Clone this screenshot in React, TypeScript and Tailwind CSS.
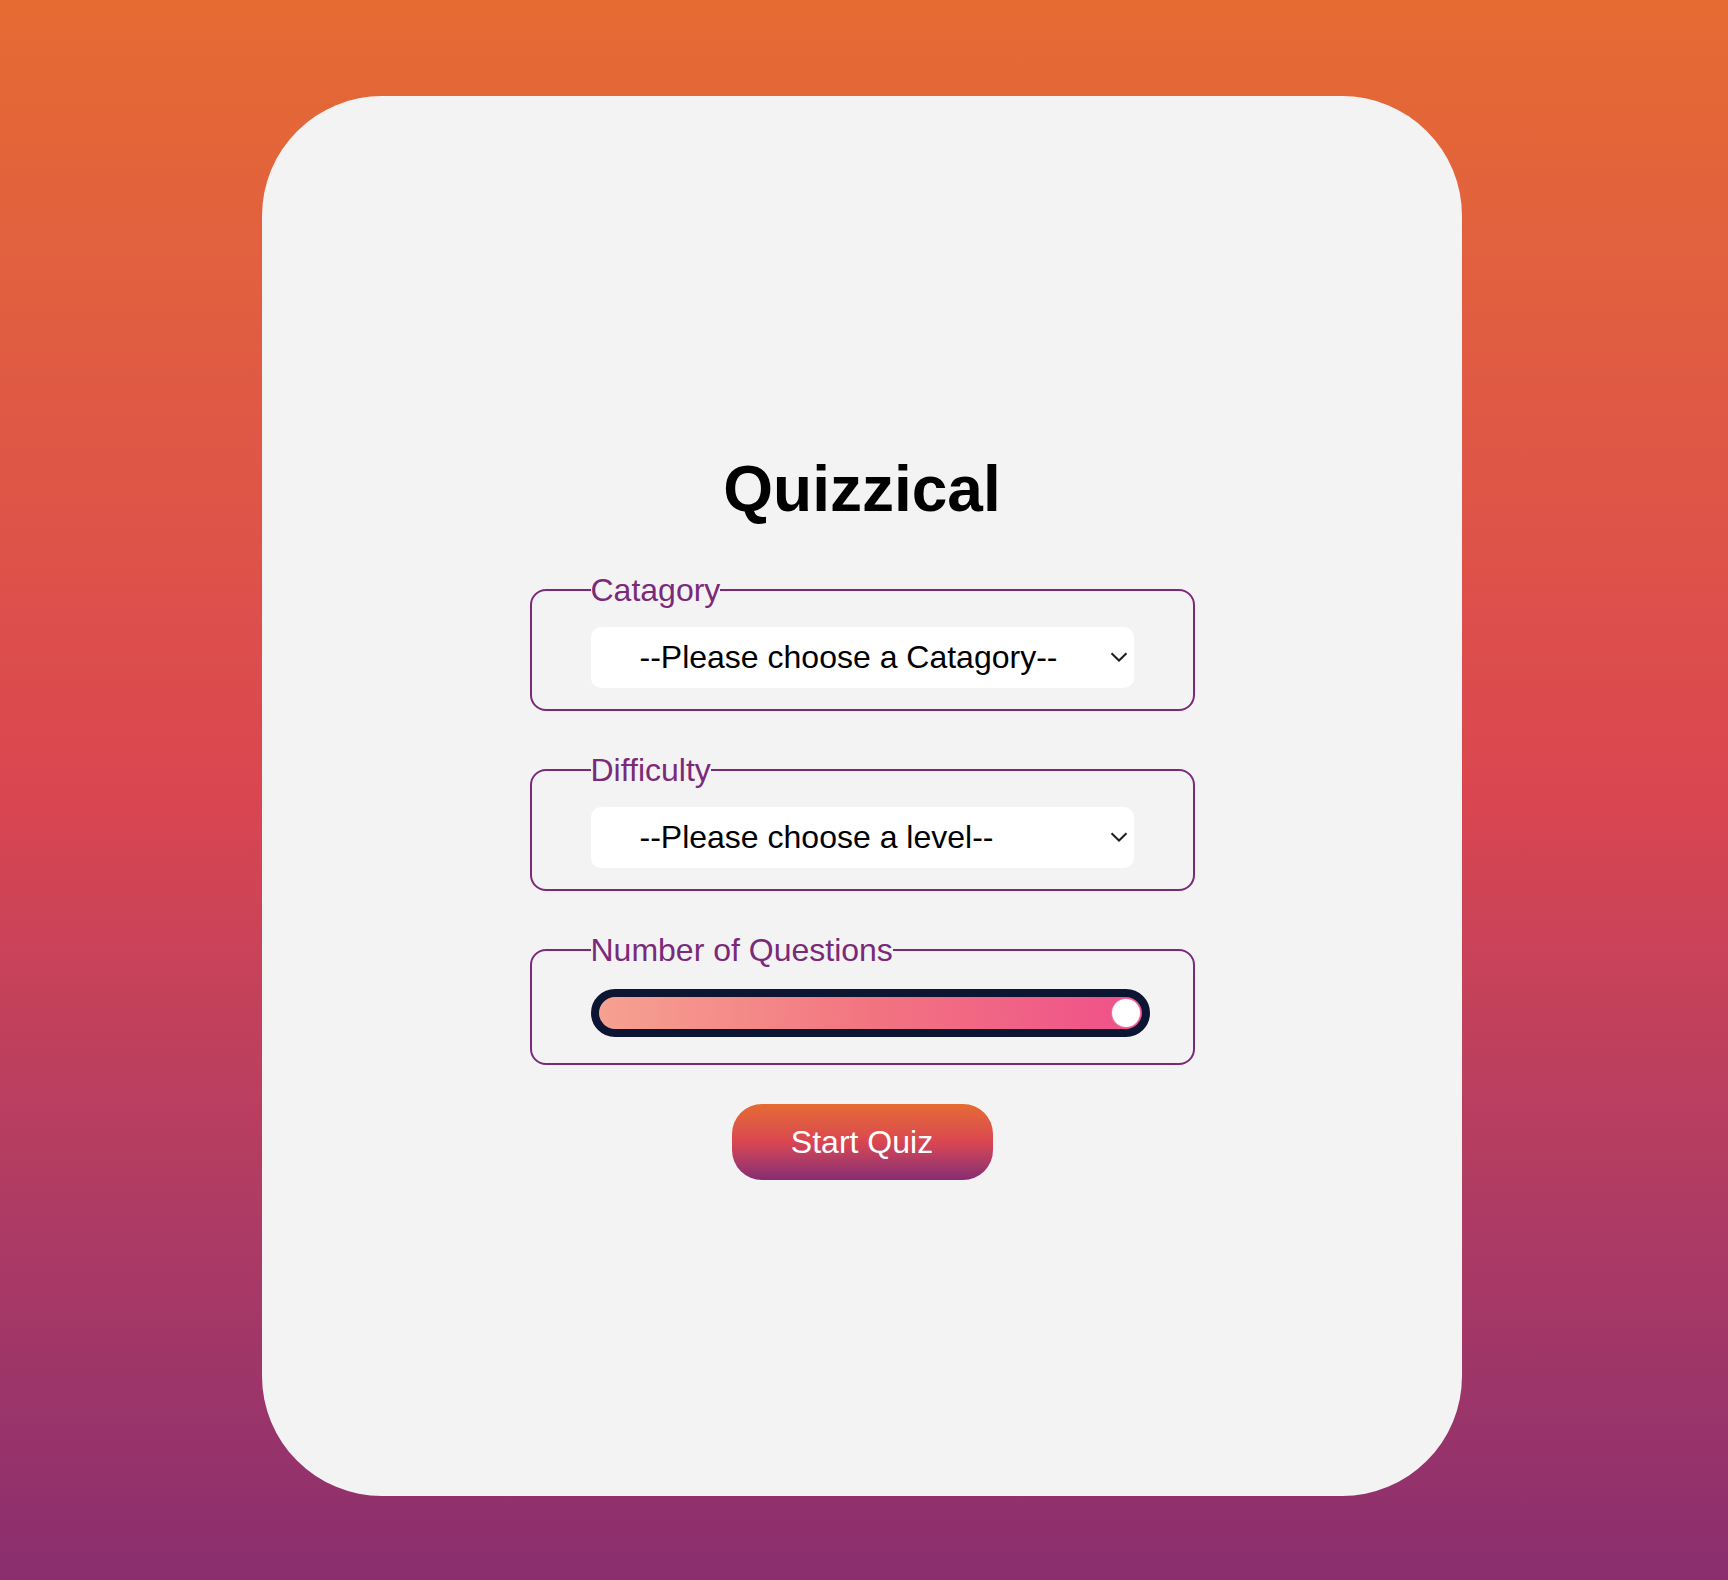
import { ReactElement } from 'react';

const font = { fontFamily: '"Liberation Sans", Arial, sans-serif' };

function Chevron() {
  return (
    <svg
      className="pointer-events-none absolute right-[6px] top-1/2 -translate-y-1/2"
      width="18"
      height="10"
      viewBox="0 0 18 10"
      fill="none"
    >
      <path d="M1.5 1.2 L9 8.5 L16.5 1.2" stroke="#1f1f1f" strokeWidth="2" />
    </svg>
  );
}

function SelectField({ label, placeholder }: { label: string; placeholder: string }) {
  return (
    <fieldset className="w-[665px] min-w-0 rounded-[16px] border-2 border-[#7b2a7a] px-[59px] pt-[13px] pb-[21px]">
      <legend className="text-[32px] leading-[48px] text-[#7b2a7a]">{label}</legend>
      <div className="relative">
        <select
          className="h-[61px] w-full appearance-none rounded-[10px] bg-white pl-[49px] text-[32px] text-black outline-none"
          defaultValue=""
          style={font}
        >
          <option value="">{placeholder}</option>
        </select>
        <Chevron />
      </div>
    </fieldset>
  );
}

function QuestionSlider() {
  return (
    <fieldset className="w-[665px] min-w-0 rounded-[16px] border-2 border-[#7b2a7a] px-[59px] pt-[13px] pb-[26px]">
      <legend className="text-[32px] leading-[48px] text-[#7b2a7a]">Number of Questions</legend>
      <div className="-mr-[16px] mt-[2px]">
        <div className="flex h-[48px] w-full items-center justify-end rounded-full border-[8px] border-[#0c1633] bg-gradient-to-r from-[#f6a191] via-[#f27480] to-[#ef4f8a] pr-[2px]">
          <div className="h-[28px] w-[28px] rounded-full bg-white shadow-[0_0_0_1px_#f0709a]" />
        </div>
      </div>
    </fieldset>
  );
}

export default function App(): ReactElement {
  return (
    <div
      className="min-h-[1580px] w-full bg-gradient-to-b from-[#e56b32] via-[#da4650] to-[#8a2e6e] pt-[96px]"
      style={font}
    >
      <div className="ml-[262px] flex h-[1400px] w-[1200px] flex-col items-center gap-[35px] rounded-[120px] bg-[#f3f3f3] pt-[357px]">
        <h1 className="mb-[4px] text-[64px] font-bold leading-[1.15] text-black">Quizzical</h1>
        <SelectField label="Catagory" placeholder="--Please choose a Catagory--" />
        <SelectField label="Difficulty" placeholder="--Please choose a level--" />
        <QuestionSlider />
        <button className="mt-[4px] h-[76px] w-[261px] rounded-[30px] bg-gradient-to-b from-[#e56b32] via-[#da4650] to-[#862c72] text-[32px] text-white">
          Start Quiz
        </button>
      </div>
    </div>
  );
}
